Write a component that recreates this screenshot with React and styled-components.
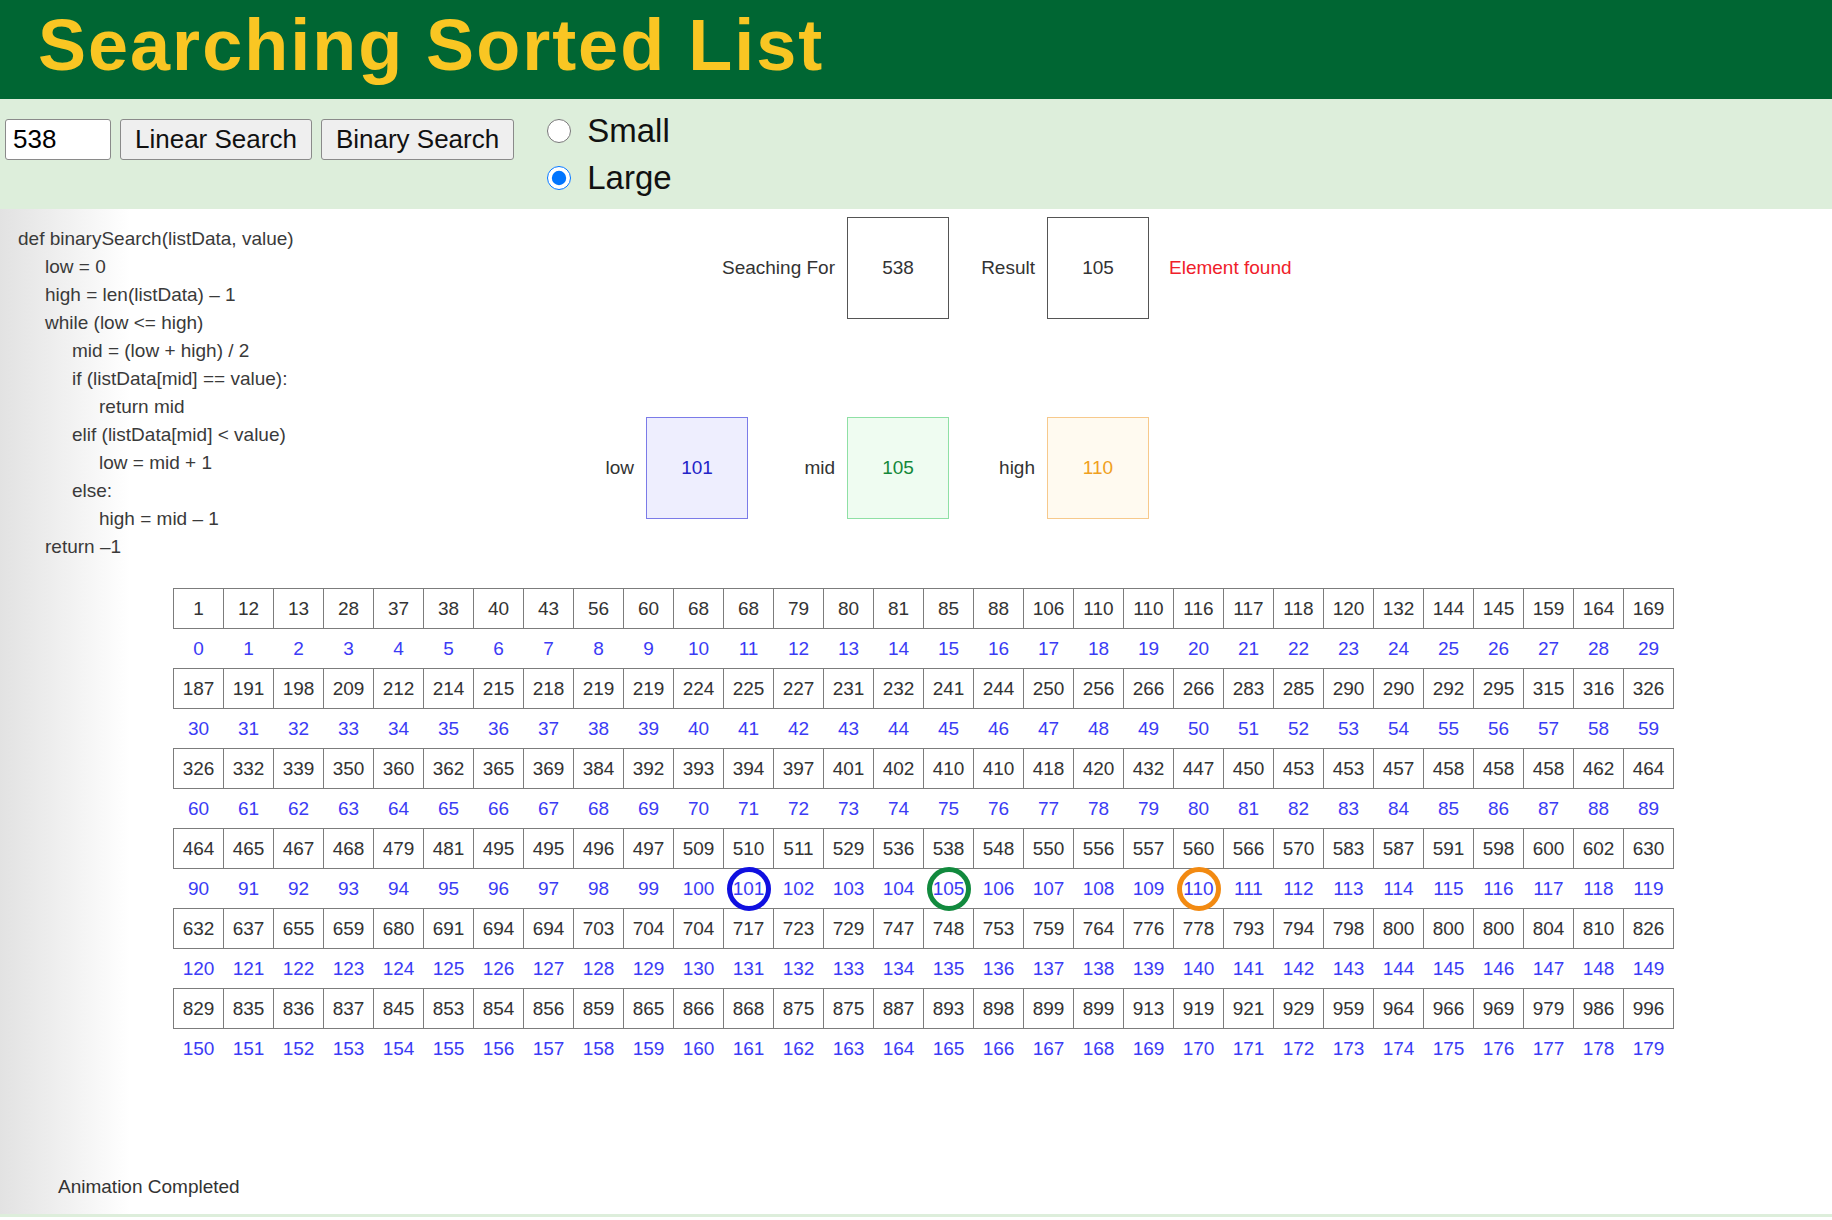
import React from 'react';
import styled, { createGlobalStyle } from 'styled-components';

const GlobalStyle = createGlobalStyle`
  body {
    margin: 0;
    font-family: "Liberation Sans", Arial, sans-serif;
    background: #fff;
  }
`;

const DATA = [
  1, 12, 13, 28, 37, 38, 40, 43, 56, 60, 68, 68, 79, 80, 81, 85, 88, 106, 110, 110, 116, 117, 118, 120, 132, 144, 145, 159, 164, 169,
  187, 191, 198, 209, 212, 214, 215, 218, 219, 219, 224, 225, 227, 231, 232, 241, 244, 250, 256, 266, 266, 283, 285, 290, 290, 292, 295, 315, 316, 326,
  326, 332, 339, 350, 360, 362, 365, 369, 384, 392, 393, 394, 397, 401, 402, 410, 410, 418, 420, 432, 447, 450, 453, 453, 457, 458, 458, 458, 462, 464,
  464, 465, 467, 468, 479, 481, 495, 495, 496, 497, 509, 510, 511, 529, 536, 538, 548, 550, 556, 557, 560, 566, 570, 583, 587, 591, 598, 600, 602, 630,
  632, 637, 655, 659, 680, 691, 694, 694, 703, 704, 704, 717, 723, 729, 747, 748, 753, 759, 764, 776, 778, 793, 794, 798, 800, 800, 800, 804, 810, 826,
  829, 835, 836, 837, 845, 853, 854, 856, 859, 865, 866, 868, 875, 875, 887, 893, 898, 899, 899, 913, 919, 921, 929, 959, 964, 966, 969, 979, 986, 996,
];

const CODE = [
  [0, 'def binarySearch(listData, value)'],
  [1, 'low = 0'],
  [1, 'high = len(listData) \u2013 1'],
  [1, 'while (low <= high)'],
  [2, 'mid = (low + high) / 2'],
  [2, 'if (listData[mid] == value):'],
  [3, 'return mid'],
  [2, 'elif (listData[mid] < value)'],
  [3, 'low = mid + 1'],
  [2, 'else:'],
  [3, 'high = mid \u2013 1'],
  [1, 'return \u20131'],
];

const MARKS = { 101: '#1010e0', 105: '#128a3e', 110: '#f28a12' };

const Header = styled.header`
  height: 99px;
  background: #006633;
  display: flex;
  align-items: center;
  padding: 0 0 10px 38px;
  box-sizing: border-box;
  h1 {
    margin: 0;
    color: #f9c623;
    font-family: "Liberation Sans", Arial, sans-serif;
    font-weight: 700;
    font-size: 72px;
    letter-spacing: 2px;
  }
`;

const Controls = styled.div`
  height: 110px;
  background: #ddeedb;
  display: flex;
  align-items: flex-start;
  padding: 0 5px;
  gap: 9px;
`;

const Input = styled.input`
  margin-top: 20px;
  width: 106px;
  height: 41px;
  box-sizing: border-box;
  border: 1.5px solid #8a8a8a;
  border-radius: 3px;
  font: 26px "Liberation Sans", Arial, sans-serif;
  padding: 0 7px;
`;

const Button = styled.button`
  margin-top: 20px;
  height: 41px;
  padding: 0 14px;
  border: 1.5px solid #8a8a8a;
  border-radius: 3px;
  background: #efefef;
  font: 26px "Liberation Sans", Arial, sans-serif;
  color: #111;
`;

const Radios = styled.div`
  margin-left: 24px;
  padding-top: 8px;
  display: flex;
  flex-direction: column;
  label {
    display: flex;
    align-items: center;
    gap: 16px;
    height: 47px;
    font-size: 33px;
    color: #111;
  }
  input {
    width: 24px;
    height: 24px;
    margin: 0;
  }
`;

const Main = styled.main`
  min-height: 1008px;
  box-sizing: border-box;
  background: linear-gradient(to right, #e2e2e2, #fff 130px);
  border-bottom: 3px solid #ddeedb;
  display: flex;
  flex-direction: column;
`;

const Top = styled.div`
  display: grid;
  grid-template-columns: 540px 1fr;
  height: 379px;
`;

const Code = styled.div`
  padding: 16px 0 0 18px;
  color: #3a3a3a;
  font-size: 19px;
`;

const CodeLine = styled.div`
  height: 28px;
  line-height: 28px;
  padding-left: ${(p) => p.$indent * 27}px;
`;

const Info = styled.div`
  display: grid;
  grid-template-columns: 106px 102px 99px 102px 98px 102px auto;
  grid-template-rows: 102px 102px;
  row-gap: 98px;
  padding-top: 8px;
  align-items: center;
  color: #333;
  font-size: 19px;
`;

const Label = styled.div`
  grid-column: ${(p) => p.$span || 'auto'};
  text-align: right;
  padding-right: 12px;
`;

const Box = styled.div`
  height: 102px;
  box-sizing: border-box;
  display: flex;
  align-items: center;
  justify-content: center;
  border: 1.5px solid ${(p) => p.$border || '#555'};
  background: ${(p) => p.$bg || '#fff'};
  color: ${(p) => p.$color || '#333'};
`;

const Status = styled.div`
  padding-left: 20px;
  color: #f0202a;
`;

const Table = styled.table`
  border-collapse: collapse;
  table-layout: fixed;
  width: 1500px;
  margin-left: 173px;
  font-size: 19px;
  color: #333;
  td {
    width: 50px;
    height: 40px;
    padding: 0;
    text-align: center;
    box-sizing: border-box;
  }
`;

const ValueCell = styled.td`
  border: 1.5px solid #7c7c7c;
`;

const IndexCell = styled.td`
  color: #3b3bf5;
  position: relative;
  span {
    position: relative;
  }
  ${(p) =>
    p.$mark &&
    `&::after {
      content: '';
      position: absolute;
      left: 3px;
      top: -2px;
      width: 44px;
      height: 44px;
      box-sizing: border-box;
      border: 5px solid ${p.$mark};
      border-radius: 50%;
    }`}
`;

const Footer = styled.div`
  margin-top: auto;
  padding: 0 0 16px 58px;
  font-size: 19px;
  color: #333;
`;

export default function App() {
  const rows = [];
  for (let r = 0; r < 6; r++) rows.push(DATA.slice(r * 30, r * 30 + 30));
  return (
    <>
      <GlobalStyle />
      <Header>
        <h1>Searching Sorted List</h1>
      </Header>
      <Controls>
        <Input defaultValue="538" />
        <Button>Linear Search</Button>
        <Button>Binary Search</Button>
        <Radios>
          <label><input type="radio" name="size" /> Small</label>
          <label><input type="radio" name="size" defaultChecked /> Large</label>
        </Radios>
      </Controls>
      <Main>
        <Top>
          <Code>
            {CODE.map(([i, t], k) => (
              <CodeLine key={k} $indent={i}>{t}</CodeLine>
            ))}
          </Code>
          <Info>
            <Label $span="1 / 4">Seaching For</Label>
            <Box>538</Box>
            <Label>Result</Label>
            <Box>105</Box>
            <Status>Element found</Status>
            <Label>low</Label>
            <Box $border="#7b7be8" $bg="#eeeefe" $color="#2323c8">101</Box>
            <Label>mid</Label>
            <Box $border="#8fe0a5" $bg="#effcf1" $color="#13883a">105</Box>
            <Label>high</Label>
            <Box $border="#f7c98c" $bg="#fffaf0" $color="#f0a020">110</Box>
          </Info>
        </Top>
        <Table>
          <tbody>
            {rows.map((row, r) => (
              <React.Fragment key={r}>
                <tr>
                  {row.map((v, c) => (
                    <ValueCell key={c}>{v}</ValueCell>
                  ))}
                </tr>
                <tr>
                  {row.map((v, c) => {
                    const idx = r * 30 + c;
                    return (
                      <IndexCell key={c} $mark={MARKS[idx]}>
                        <span>{idx}</span>
                      </IndexCell>
                    );
                  })}
                </tr>
              </React.Fragment>
            ))}
          </tbody>
        </Table>
        <Footer>Animation Completed</Footer>
      </Main>
    </>
  );
}
